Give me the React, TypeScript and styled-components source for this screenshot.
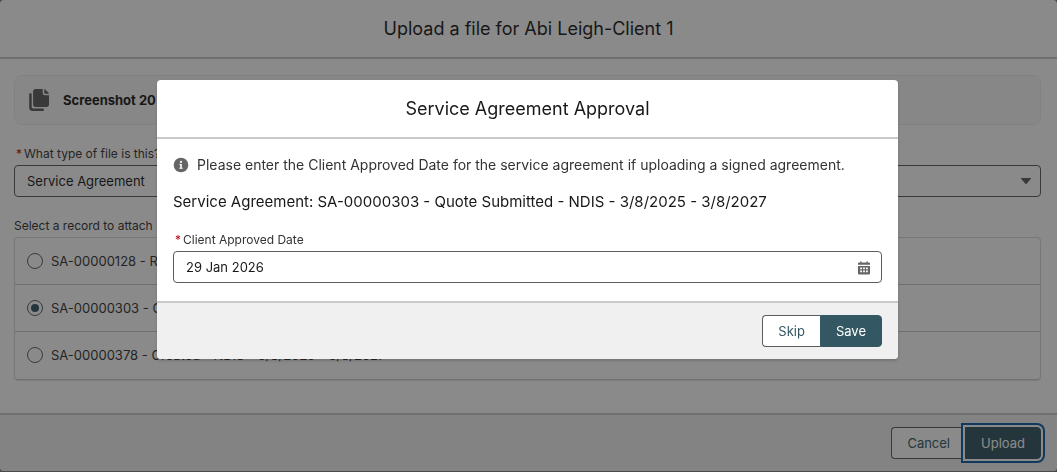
import React from "react";
import styled, { createGlobalStyle, css } from "styled-components";

const Global = createGlobalStyle`
  *, *::before, *::after { box-sizing: border-box; }
  html { background: #7e7e7e; }
  body { margin: 0; font: 13px/20px Inter, "Liberation Sans", sans-serif; color: #181818; }
  button, input, select { font: inherit; color: inherit; }
  h1, h2, p, fieldset { margin: 0; padding: 0; border: 0; }
`;

const UploadDialog = styled.main`
  background: #fff;
  border-radius: 4px;
  overflow: hidden;
  margin-bottom: 1px;
`;

const DialogHeader = styled.header`
  padding: 14px 16px;
  border-bottom: 2px solid #c9c9c9;
  text-align: center;
`;

const DialogTitle = styled.h2`
  font-size: 18px;
  line-height: 29px;
  font-weight: 400;
`;

const UploadBody = styled.div`
  padding: 16px 16px 33px 14px;
`;

const FileCard = styled.div`
  display: flex;
  align-items: center;
  gap: 14px;
  height: 50px;
  padding: 0 14px;
  border: 1px solid #ececec;
  border-radius: 8px;
  background: #f8f8f8;
  font-weight: 700;
  white-space: nowrap;
`;

const FieldLabel = styled.label`
  display: block;
  padding: 0 2px;
  font-size: 12px;
  line-height: 16px;
  color: #333;
  margin-bottom: 3px;
`;

const Required = styled.abbr`
  color: #ba0517;
  margin-right: 2px;
  text-decoration: none;
`;

const fieldBox = css`
  display: block;
  width: 100%;
  height: 32px;
  padding: 0 12px;
  border: 1px solid #5c5c5c;
  border-radius: 4px;
  background: #fff;
`;

const SelectField = styled.div`
  position: relative;
  margin-top: 21px;
`;

const Select = styled.select`
  ${fieldBox}
  appearance: none;
`;

const Caret = styled.svg`
  position: absolute;
  right: 9px;
  bottom: 12px;
  pointer-events: none;
`;

const Legend = styled.legend`
  padding: 0;
  margin-bottom: 3px;
  font-size: 12px;
  line-height: 16px;
  color: #333;
`;

const RecordGroup = styled.fieldset`
  min-width: 0;
  && { margin-top: 21px; }
`;

const RecordList = styled.div`
  border: 1px solid #d8d8d8;
  border-bottom-color: #c9c9c9;
  border-radius: 4px;
  box-shadow: 0 1px 1px #e5e5e5;
`;

const RecordRow = styled.label`
  display: flex;
  align-items: center;
  gap: 8px;
  height: 47px;
  padding: 0 12px 1px;
  color: #333;
  white-space: nowrap;
  &:not(:last-child) {
    padding-bottom: 0;
    border-bottom: 1px solid #c9c9c9;
  }
`;

const Radio = styled.input`
  appearance: none;
  display: grid;
  place-items: center;
  width: 16px;
  height: 16px;
  margin: 0;
  border: 1px solid #5c5c5c;
  border-radius: 50%;
  &:checked::before {
    content: "";
    width: 8px;
    height: 8px;
    border-radius: 50%;
    background: #335763;
  }
`;

const DialogFooter = styled.footer`
  display: flex;
  justify-content: flex-end;
  padding: 12px 16px;
  border-top: 2px solid #c9c9c9;
  background: #f0f0f0;
`;

const Button = styled.button<{ $primary?: boolean; $focused?: boolean }>`
  height: 32px;
  padding: 0 15px;
  border: 1px solid ${(p) => (p.$primary ? "#335763" : "#5c5c5c")};
  background: ${(p) => (p.$primary ? "#335763" : "#fff")};
  color: ${(p) => (p.$primary ? "#fff" : "#335763")};
  border-radius: ${(p) => (p.$primary ? "0 4px 4px 0" : "4px 0 0 4px")};
  border-right-width: ${(p) => (p.$primary ? "1px" : "0")};
  ${(p) => p.$focused && css`box-shadow: 0 0 0 2px #fff, 0 0 0 4px #0b5cab;`}
`;

const Backdrop = styled.div`
  position: fixed;
  inset: 0;
  padding: 80px 159px 0 157px;
  background: rgba(22, 22, 22, 0.5);
`;

const ApprovalDialog = styled.section`
  background: #fff;
  border-radius: 4px;
  overflow: hidden;
  box-shadow: 0 2px 3px rgba(0, 0, 0, 0.16);
`;

const ApprovalBody = styled.div`
  padding: 16px 16px 18px;
`;

const Notice = styled.p`
  display: flex;
  align-items: center;
  gap: 8px;
  font-size: 14px;
  color: #333;
`;

const Agreement = styled.p`
  font-size: 15px;
  line-height: 24px;
  && { margin: 15px 0 18px; }
`;

const DateField = styled.div`
  position: relative;
`;

const DateInput = styled.input`
  ${fieldBox}
`;

const CalendarButton = styled.button`
  position: absolute;
  right: 11px;
  bottom: 8px;
  display: flex;
  padding: 0;
  border: 0;
  background: none;
`;

const FilesIcon = () => (
  <svg width="20" height="22" viewBox="0 0 20 22" fill="#5c5c5c" aria-hidden="true">
    <path d="M6.5 0h7.2v4.3c0 1.1.8 1.9 1.9 1.9H20v9.3c0 1.4-1 2.4-2.4 2.4H6.5c-1.4 0-2.4-1-2.4-2.4V2.4C4.1 1 5.1 0 6.5 0z" />
    <path d="M15.3.6c0-.5.4-.6.7-.3l3.7 3.7c.3.3.2.7-.3.7h-3.2c-.6 0-.9-.3-.9-.9z" />
    <path d="M1.5 4.2c.8 0 1.2.5 1.2 1.2v12.3c0 1 .8 1.800 1.800 1.800h9.200c.9 0 1.300.5 1.300 1.200s-.5 1.300-1.300 1.300H3.500C1.500 22 .2 20.600.2 18.700V5.400c0-.7.5-1.200 1.300-1.200z" />
  </svg>
);

const InfoIcon = () => (
  <svg width="16" height="16" viewBox="0 0 16 16" aria-hidden="true">
    <circle cx="8" cy="8" r="7.300" fill="#666" />
    <circle cx="8" cy="4.900" r="1.100" fill="#fff" />
    <path d="M6.400 7h2.400v3.700h.9v1H6.300v-1h.9V8h-.8z" fill="#fff" />
  </svg>
);

const CalendarIcon = () => (
  <svg width="14" height="14" viewBox="0 0 14 14" aria-hidden="true">
    <path
      fill="#666"
      fillRule="evenodd"
      d="M3.200.9c0-.5.300-.7.700-.7s.7.200.7.700v.6h4.800V.9c0-.5.300-.7.700-.7s.7.200.7.700v.6h.9c.7 0 1.300.5 1.300 1.300v1H1v-1c0-.8.600-1.300 1.300-1.300h.9zM1 5h12v7.200c0 .8-.6 1.300-1.300 1.300H2.300c-.7 0-1.300-.5-1.300-1.300zM3.200 6.400v1.800h1.800V6.400zm2.900 0v1.800h1.800V6.400zm2.900 0v1.800h1.800V6.400zM3.200 9.500v1.800h1.800V9.500zm2.900 0v1.800h1.800V9.500zm2.900 0v1.800h1.800V9.500z"
    />
  </svg>
);

const records = [
  { name: "SA-00000128 - Rejected", checked: false },
  { name: "SA-00000303 - Quote Submitted", checked: true },
  { name: "SA-00000378 - Created - NDIS - 3/8/2025 - 3/8/2027", checked: false },
];

export default function App() {
  return (
    <>
      <Global />
      <UploadDialog>
        <DialogHeader>
          <DialogTitle as="h1">Upload a file for Abi Leigh-Client 1</DialogTitle>
        </DialogHeader>
        <UploadBody>
          <FileCard>
            <FilesIcon />
            Screenshot 20
          </FileCard>
          <SelectField>
            <FieldLabel htmlFor="file-type">
              <Required>*</Required>What type of file is this?
            </FieldLabel>
            <Select id="file-type">
              <option>Service Agreement</option>
            </Select>
            <Caret width="12" height="8" viewBox="0 0 12 8" fill="#5c5c5c" aria-hidden="true">
              <path d="M1.500 1h9c.5 0 .7.4.4.8L6.600 6.800c-.3.400-.9.400-1.200 0L1.100 1.800c-.3-.4-.1-.8.4-.8z" />
            </Caret>
          </SelectField>
          <RecordGroup>
            <Legend>Select a record to attach</Legend>
            <RecordList>
              {records.map((r) => (
                <RecordRow key={r.name}>
                  <Radio type="radio" name="record" defaultChecked={r.checked} />
                  {r.name}
                </RecordRow>
              ))}
            </RecordList>
          </RecordGroup>
        </UploadBody>
        <DialogFooter>
          <Button type="button">Cancel</Button>
          <Button type="button" $primary $focused>Upload</Button>
        </DialogFooter>
      </UploadDialog>
      <Backdrop>
        <ApprovalDialog role="dialog" aria-modal="true" aria-labelledby="approval-title">
          <DialogHeader>
            <DialogTitle id="approval-title">Service Agreement Approval</DialogTitle>
          </DialogHeader>
          <ApprovalBody>
            <Notice>
              <InfoIcon />
              Please enter the Client Approved Date for the service agreement if uploading a signed agreement.
            </Notice>
            <Agreement>Service Agreement: SA-00000303 - Quote Submitted - NDIS - 3/8/2025 - 3/8/2027</Agreement>
            <DateField>
              <FieldLabel htmlFor="approved-date">
                <Required>*</Required>Client Approved Date
              </FieldLabel>
              <DateInput id="approved-date" type="text" defaultValue="29 Jan 2026" />
              <CalendarButton type="button" aria-label="Select a date">
                <CalendarIcon />
              </CalendarButton>
            </DateField>
          </ApprovalBody>
          <DialogFooter>
            <Button type="button">Skip</Button>
            <Button type="button" $primary>Save</Button>
          </DialogFooter>
        </ApprovalDialog>
      </Backdrop>
    </>
  );
}
